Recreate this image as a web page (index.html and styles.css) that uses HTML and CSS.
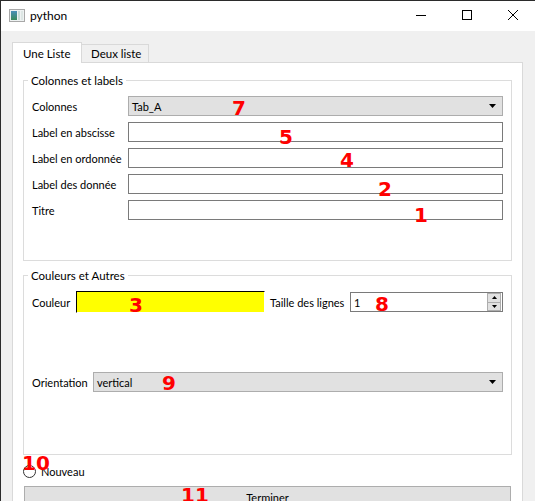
FILE: index.html
```html
<!DOCTYPE html>
<html lang="fr">
<head>
<meta charset="utf-8">
<title>python</title>
<link rel="stylesheet" href="styles.css">
</head>
<body>
<div class="window">
  <header class="titlebar">
    <svg class="app-icon" viewBox="0 0 16 13" width="16" height="13">
      <defs>
        <linearGradient id="g" x1="0" y1="0" x2="0" y2="1">
          <stop offset="0" stop-color="#4a90b8"/>
          <stop offset="1" stop-color="#3a8a5a"/>
        </linearGradient>
      </defs>
      <rect x="0.5" y="0.5" width="15" height="12" fill="#eef2f2" stroke="#a8a8a8"/>
      <rect x="2" y="2" width="6" height="9" fill="url(#g)"/>
      <rect x="9" y="2" width="2" height="9" fill="#c9dcd6"/>
      <rect x="12" y="2" width="2" height="9" fill="#dde6e4"/>
    </svg>
    <span class="title">python</span>
    <div class="controls">
      <span class="ctl"><svg viewBox="0 0 10 10" width="10" height="10"><path d="M0 5.5H10" stroke="#000" stroke-width="1"/></svg></span>
      <span class="ctl"><svg viewBox="0 0 10 10" width="10" height="10"><rect x="0.5" y="0.5" width="9" height="9" fill="none" stroke="#000" stroke-width="1"/></svg></span>
      <span class="ctl"><svg viewBox="0 0 10 10" width="10" height="10"><path d="M0 0L10 10M10 0L0 10" stroke="#000" stroke-width="1"/></svg></span>
    </div>
  </header>
  <main class="client">
    <nav class="tabs">
      <span class="tab active">Une Liste</span>
      <span class="tab">Deux liste</span>
    </nav>
    <section class="pane">
      <div class="group g1">
        <div class="group-title">Colonnes et labels</div>
        <div class="form">
          <div class="row">
            <span class="lbl">Colonnes</span>
            <div class="combo"><span>Tab_A</span><svg class="arrow" viewBox="0 0 7 4" width="7" height="4"><polygon points="0,0 7,0 3.5,4" fill="#000"/></svg></div>
          </div>
          <div class="row"><span class="lbl">Label en abscisse</span><div class="field"></div></div>
          <div class="row"><span class="lbl">Label en ordonnée</span><div class="field"></div></div>
          <div class="row"><span class="lbl">Label des donnée</span><div class="field"></div></div>
          <div class="row"><span class="lbl">Titre</span><div class="field"></div></div>
        </div>
      </div>
      <div class="group g2">
        <div class="group-title">Couleurs et Autres</div>
        <div class="row row-color">
          <span class="lbl lbl-couleur">Couleur</span>
          <div class="swatch"></div>
          <span class="lbl lbl-taille">Taille des lignes</span>
          <div class="spin">
            <span class="spin-val">1</span>
            <div class="spin-btns">
              <span class="spin-btn"><svg viewBox="0 0 5 3" width="5" height="3"><polygon points="2.5,0 5,3 0,3" fill="#000"/></svg></span>
              <span class="spin-btn"><svg viewBox="0 0 5 3" width="5" height="3"><polygon points="0,0 5,0 2.5,3" fill="#000"/></svg></span>
            </div>
          </div>
        </div>
        <div class="row row-orient">
          <span class="lbl lbl-orient">Orientation</span>
          <div class="combo"><span>vertical</span><svg class="arrow" viewBox="0 0 7 4" width="7" height="4"><polygon points="0,0 7,0 3.5,4" fill="#000"/></svg></div>
        </div>
      </div>
      <label class="radio"><span class="circle"></span><span>Nouveau</span></label>
      <div class="button">Terminer</div>
    </section>
  </main>
</div>
<span class="mark m7">7</span>
<span class="mark m5">5</span>
<span class="mark m4">4</span>
<span class="mark m2">2</span>
<span class="mark m1">1</span>
<span class="mark m3">3</span>
<span class="mark m8">8</span>
<span class="mark m9">9</span>
<span class="mark m10">10</span>
<span class="mark m11">11</span>
</body>
</html>
```

FILE: styles.css
```css
* { box-sizing: border-box; }
html, body { margin: 0; padding: 0; }
body {
  position: relative;
  width: 535px;
  height: 501px;
  overflow: hidden;
  background: #f0f0f0;
  font-family: Lato, "Noto Sans", sans-serif;
  font-size: 11px;
  color: #000;
}
.window {
  width: 535px;
  height: 501px;
  border-top: 1px solid #2b2b2b;
  border-left: 1px solid #2b2b2b;
  display: flex;
  flex-direction: column;
  overflow: hidden;
}
.titlebar {
  flex: none;
  height: 30px;
  background: #fff;
  display: flex;
  align-items: center;
  padding-left: 8px;
}
.app-icon { flex: none; margin-top: -2px; }
.title { margin-left: 5px; font-size: 12px; margin-top: -1px; }
.controls {
  margin-left: auto;
  margin-right: -1px;
  display: flex;
  align-self: stretch;
}
.ctl {
  width: 46px;
  display: flex;
  justify-content: center;
  align-items: flex-start;
  padding-top: 9px;
}
.ctl svg { display: block; }

.client {
  flex: 1;
  min-height: 0;
  background: #f0f0f0;
  padding: 11px 12px 0 11px;
  display: flex;
  flex-direction: column;
  overflow: hidden;
}
.tabs {
  flex: none;
  display: flex;
  align-items: flex-end;
  margin-bottom: -1px;
  position: relative;
  z-index: 1;
}
.tab {
  height: 19px;
  width: 68px;
  margin-left: -1px;
  padding-left: 9px;
  border: 1px solid #d9d9d9;
  background: #f0f0f0;
  display: flex;
  align-items: center;
  font-size: 11.5px;
}
.tab.active {
  height: 21px;
  width: 70px;
  margin-left: 0;
  padding-left: 10px;
  background: #fff;
  border-bottom: none;
  position: relative;
  z-index: 1;
}
.pane {
  flex: none;
  background: #fff;
  border: 1px solid #d9d9d9;
  padding: 17px 10px 40px 10px;
  display: flex;
  flex-direction: column;
}
.group {
  flex: none;
  border: 1px solid #dcdcdc;
  padding: 0 8px;
  display: flex;
  flex-direction: column;
}
.g1 { height: 181px; }
.g2 { height: 180px; margin-top: 14px; }
.group-title {
  align-self: flex-start;
  height: 16px;
  line-height: 16px;
  margin: -8px 0 0 -4px;
  padding: 0 3px;
  background: #fff;
  font-size: 11.5px;
}
.form {
  margin-top: 7px;
  display: flex;
  flex-direction: column;
  gap: 6px;
}
.row {
  display: flex;
  align-items: center;
  height: 20px;
}
.lbl { flex: none; width: 96px; white-space: nowrap; }
.field {
  flex: 1;
  height: 20px;
  border: 1px solid #7a7a7a;
  background: #fff;
}
.combo {
  flex: 1;
  height: 20px;
  border: 1px solid #adadad;
  background: #e1e1e1;
  display: flex;
  align-items: center;
  padding: 0 6px 0 3px;
}
.combo .arrow { margin-left: auto; display: block; }

.row-color { height: 22px; margin-top: 7px; }
.lbl-couleur { width: 44px; }
.swatch {
  flex: none;
  width: 189px;
  height: 22px;
  background: #ffff00;
  background-clip: padding-box;
  border-top: 1px solid #000;
  border-left: 1px solid #000;
  border-right: 1px solid transparent;
  border-bottom: 1px solid transparent;
}
.lbl-taille { width: 80px; margin-left: 5px; }
.spin {
  flex: 1;
  height: 20px;
  border: 1px solid #7a7a7a;
  background: #fff;
  display: flex;
  align-items: center;
  padding: 0 1px 0 3px;
}
.spin-val { flex: 1; }
.spin-btns {
  display: flex;
  flex-direction: column;
  width: 14px;
  height: 18px;
}
.spin-btn {
  flex: 1;
  border: 1px solid #adadad;
  background: #e1e1e1;
  display: flex;
  align-items: center;
  justify-content: center;
}
.spin-btn + .spin-btn { border-top: none; }
.spin-btn svg { display: block; }

.row-orient { margin-top: 59px; }
.lbl-orient { width: 61px; }

.radio {
  flex: none;
  margin-top: 8px;
  height: 16px;
  display: flex;
  align-items: center;
  gap: 5px;
}
.circle {
  width: 13px;
  height: 13px;
  border: 1px solid #333;
  border-radius: 50%;
  background: #fff;
}
.button {
  flex: none;
  margin: 7px 1px 0 1px;
  height: 23px;
  border: 1px solid #adadad;
  background: #e1e1e1;
  display: flex;
  align-items: center;
  justify-content: center;
}

.mark {
  position: absolute;
  font-family: "DejaVu Sans", sans-serif;
  font-weight: bold;
  font-size: 20px;
  line-height: 20px;
  color: #ff0000;
  white-space: nowrap;
}
.m7 { left: 232px; top: 98px; }
.m5 { left: 279px; top: 127px; }
.m4 { left: 340px; top: 150px; }
.m2 { left: 378px; top: 179px; }
.m1 { left: 414px; top: 205px; }
.m3 { left: 129px; top: 295px; }
.m8 { left: 375px; top: 294px; }
.m9 { left: 162px; top: 373px; }
.m10 { left: 22px; top: 453px; }
.m11 { left: 181px; top: 485px; }
```
